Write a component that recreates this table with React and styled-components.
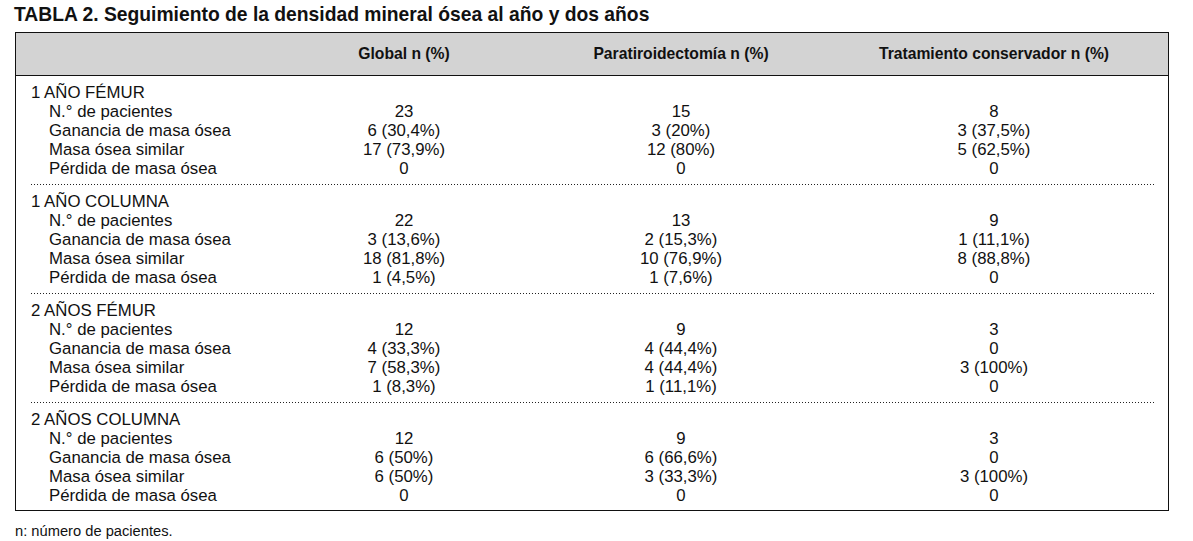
import styled, { createGlobalStyle } from "styled-components";

const GlobalStyle = createGlobalStyle`
  html, body {
    margin: 0;
    padding: 0;
    background: #fff;
  }
  body {
    font-family: "Liberation Sans", Arial, sans-serif;
    color: #111;
  }
`;

const groups = [
  {
    title: "1 AÑO FÉMUR",
    rows: [
      ["N.° de pacientes", "23", "15", "8"],
      ["Ganancia de masa ósea", "6 (30,4%)", "3 (20%)", "3 (37,5%)"],
      ["Masa ósea similar", "17 (73,9%)", "12 (80%)", "5 (62,5%)"],
      ["Pérdida de masa ósea", "0", "0", "0"],
    ],
  },
  {
    title: "1 AÑO COLUMNA",
    rows: [
      ["N.° de pacientes", "22", "13", "9"],
      ["Ganancia de masa ósea", "3 (13,6%)", "2 (15,3%)", "1 (11,1%)"],
      ["Masa ósea similar", "18 (81,8%)", "10 (76,9%)", "8 (88,8%)"],
      ["Pérdida de masa ósea", "1 (4,5%)", "1 (7,6%)", "0"],
    ],
  },
  {
    title: "2 AÑOS FÉMUR",
    rows: [
      ["N.° de pacientes", "12", "9", "3"],
      ["Ganancia de masa ósea", "4 (33,3%)", "4 (44,4%)", "0"],
      ["Masa ósea similar", "7 (58,3%)", "4 (44,4%)", "3 (100%)"],
      ["Pérdida de masa ósea", "1 (8,3%)", "1 (11,1%)", "0"],
    ],
  },
  {
    title: "2 AÑOS COLUMNA",
    rows: [
      ["N.° de pacientes", "12", "9", "3"],
      ["Ganancia de masa ósea", "6 (50%)", "6 (66,6%)", "0"],
      ["Masa ósea similar", "6 (50%)", "3 (33,3%)", "3 (100%)"],
      ["Pérdida de masa ósea", "0", "0", "0"],
    ],
  },
];

const Page = styled.div`
  width: 1193px;
  height: 541px;
  padding: 4px 0 0 14px;
  box-sizing: border-box;
`;

const Title = styled.h2`
  margin: 0;
  font-size: 19.3px;
  font-weight: bold;
  line-height: 22px;
`;

const Table = styled.div`
  margin: 6px 0 0 1px;
  width: 1154px;
  box-sizing: border-box;
  border: 1.5px solid #111;
`;

const Grid = styled.div`
  display: grid;
  grid-template-columns: 250px 276px 278px 1fr;
`;

const HeaderRow = styled(Grid)`
  height: 42px;
  align-items: center;
  background: #d3d3d3;
  border-bottom: 1.5px solid #111;
  font-size: 15.7px;
  font-weight: bold;
`;

const HeadCell = styled.div`
  text-align: center;
`;

const Group = styled.div`
  padding: 7px 0 7px;
  position: relative;

  &:not(:last-child)::after {
    content: "";
    position: absolute;
    left: 15px;
    right: 14px;
    bottom: 0;
    height: 1px;
    background: repeating-linear-gradient(
      to right,
      #222 0,
      #222 1px,
      transparent 1px,
      transparent 3px
    );
  }

  &:last-child {
    padding-bottom: 5px;
  }
`;

const GroupTitle = styled.div`
  padding-left: 15px;
  font-size: 16.8px;
  line-height: 19px;
`;

const DataRow = styled(Grid)`
  font-size: 16.8px;
  line-height: 19px;
`;

const Label = styled.div`
  padding-left: 33px;
  white-space: nowrap;
`;

const Value = styled.div`
  text-align: center;
`;

const Note = styled.p`
  margin: 12px 0 0 1px;
  font-size: 14.7px;
`;

export default function App() {
  return (
    <Page>
      <GlobalStyle />
      <Title>TABLA 2. Seguimiento de la densidad mineral ósea al año y dos años</Title>
      <Table>
        <HeaderRow>
          <HeadCell />
          <HeadCell>Global n (%)</HeadCell>
          <HeadCell>Paratiroidectomía n (%)</HeadCell>
          <HeadCell>Tratamiento conservador n (%)</HeadCell>
        </HeaderRow>
        {groups.map((g) => (
          <Group key={g.title}>
            <GroupTitle>{g.title}</GroupTitle>
            {g.rows.map((r, i) => (
              <DataRow key={i}>
                <Label>{r[0]}</Label>
                <Value>{r[1]}</Value>
                <Value>{r[2]}</Value>
                <Value>{r[3]}</Value>
              </DataRow>
            ))}
          </Group>
        ))}
      </Table>
      <Note>n: número de pacientes.</Note>
    </Page>
  );
}
